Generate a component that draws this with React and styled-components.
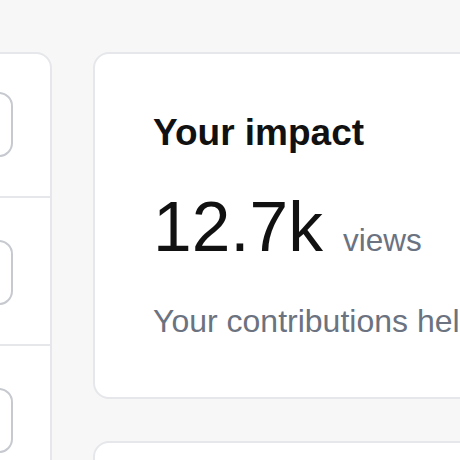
import React from 'react';
import styled, { createGlobalStyle } from 'styled-components';

const GlobalStyle = createGlobalStyle`
  html, body {
    margin: 0;
    padding: 0;
    background: #f7f7f8;
    font-family: 'Liberation Sans', Arial, sans-serif;
    overflow: hidden;
  }
`;

const Page = styled.div`
  display: grid;
  grid-template-columns: 300px 520px;
  gap: 41px;
  margin-left: -248px;
  padding-top: 52px;
  width: 900px;
  height: 460px;
  overflow: hidden;
`;

const Card = styled.div`
  background: #ffffff;
  border: 2px solid #e6e7ea;
  border-radius: 16px;
`;

const SideCard = styled(Card)`
  display: flex;
  flex-direction: column;
  height: 700px;
`;

const SideRow = styled.div`
  display: flex;
  justify-content: flex-end;
  padding: 42px 37px 39px 24px;
  border-bottom: 2px solid #e6e7ea;

  &:first-child {
    padding-top: 38px;
  }
`;

const SideButton = styled.div`
  width: 200px;
  height: 61px;
  border: 2px solid #c6c9cf;
  border-radius: 14px;
  background: #ffffff;
`;

const Column = styled.div`
  display: flex;
  flex-direction: column;
  gap: 42px;
`;

const ImpactCard = styled(Card)`
  padding: 59px 58px 58px;
`;

const Title = styled.h2`
  margin: 0;
  font-size: 37px;
  line-height: 40px;
  font-weight: 700;
  color: #111111;
`;

const StatRow = styled.div`
  display: flex;
  align-items: baseline;
  gap: 20px;
  margin-top: 38px;
`;

const StatValue = styled.span`
  font-size: 69.5px;
  line-height: 72px;
  color: #111111;
`;

const StatUnit = styled.span`
  font-size: 31.5px;
  color: #6b7280;
`;

const Description = styled.p`
  margin: 40px 0 0;
  font-size: 32px;
  line-height: 36px;
  color: #6b7280;
  white-space: nowrap;
`;

const NextCard = styled(Card)`
  height: 200px;
`;

export default function App() {
  return (
    <>
      <GlobalStyle />
      <Page>
        <SideCard>
          <SideRow>
            <SideButton />
          </SideRow>
          <SideRow>
            <SideButton />
          </SideRow>
          <SideRow>
            <SideButton />
          </SideRow>
        </SideCard>
        <Column>
          <ImpactCard>
            <Title>Your impact</Title>
            <StatRow>
              <StatValue>12.7k</StatValue>
              <StatUnit>views</StatUnit>
            </StatRow>
            <Description>Your contributions help others learn every day</Description>
          </ImpactCard>
          <NextCard />
        </Column>
      </Page>
    </>
  );
}
